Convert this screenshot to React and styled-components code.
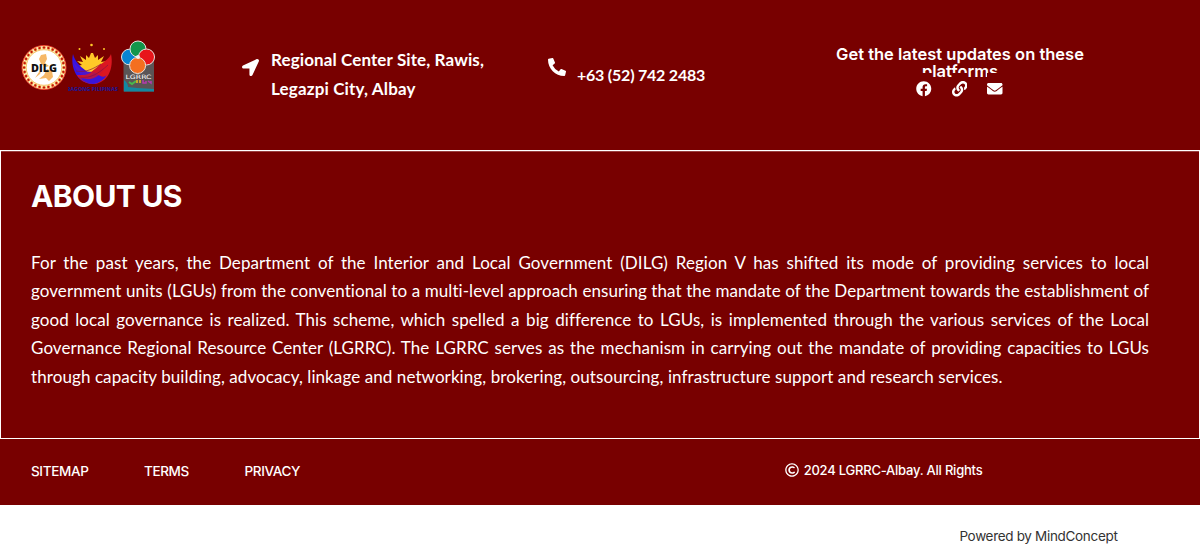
import React from "react";
import styled, { createGlobalStyle } from "styled-components";
import { FaLocationArrow, FaPhoneAlt, FaFacebook, FaLink, FaEnvelope, FaRegCopyright } from "react-icons/fa";

const Global = createGlobalStyle`
  * { box-sizing: border-box; }
  body { margin: 0; background: #fff; font-family: "Lato", "Liberation Sans", sans-serif; }
`;
const Footer = styled.footer`
  background: #780000;
  color: #fff;
  height: 505px;
`;
const Top = styled.div`
  height: 150px;
  display: grid;
  grid-template-columns: 242px 306px 288px 248px;
  align-items: start;
`;
const Logos = styled.div`
  display: flex;
  padding: 40px 0 0 20px;
`;
const Contact = styled.div`
  display: flex;
  gap: ${(p) => p.$gap}px;
  padding-top: ${(p) => p.$top}px;
  svg { margin-top: ${(p) => p.$iconTop}px; flex: none; }
`;
const ContactText = styled.div`
  padding-top: ${(p) => p.$offset || 0}px;
  font-weight: 700;
  font-size: ${(p) => p.$size || 17}px;
  line-height: 28.5px;
  white-space: nowrap;
`;
const Line = styled.span`
  display: block;
  white-space: nowrap;
  letter-spacing: ${(p) => p.$ls || 0}px;
`;
const Social = styled.div`
  padding-top: 46px;
  text-align: center;
`;
const SocialTitle = styled.h2`
  margin: 0;
  height: 30px;
  font: 600 16.5px/17px "Inter", sans-serif;
`;
const SocialIcons = styled.div`
  position: relative;
  display: flex;
  justify-content: center;
  gap: 20px;
  margin-top: -3px;
  padding-right: 1px;
`;
const SocialLink = styled.span`
  display: flex;
  padding-top: 8px;
  background: #780000;
`;
const About = styled.section`
  height: 289px;
  border: 1px solid #fff;
  box-shadow: inset 0 1px 0 rgba(255, 255, 255, 0.25);
  padding: 25px 50px 0 30px;
`;
const Title = styled.h1`
  margin: 0;
  font: 700 30px/41px "Inter", sans-serif;
  letter-spacing: -0.65px;
`;
const Body = styled.div`
  margin-top: 31.5px;
  font-size: 17px;
  line-height: 28.5px;
  font-variant-ligatures: none;
`;
const Justified = styled(Line)`
  width: 1118px;
  text-align: justify;
  text-align-last: ${(p) => (p.$last ? "left" : "justify")};
`;
const Bottom = styled.div`
  height: 66px;
  display: flex;
  justify-content: space-between;
  font: 500 13.5px/20px "Inter", sans-serif;
  padding: 22px 217.5px 0 31px;
`;
const Links = styled.nav`
  display: flex;
  gap: 55.5px;
`;
const Copyright = styled.div`
  display: flex;
  align-items: center;
  gap: 5px;
  height: 18px;
  font-size: 13px;
`;
const Credit = styled.div`
  display: flex;
  justify-content: flex-end;
  padding: 21px 82.5px 0 0;
  color: #333;
  font: 400 13.5px/20px "Inter", sans-serif;
`;

const beads = Array.from({ length: 28 }, (_, i) => i * (360 / 28));
const DilgLogo = () => (
  <svg width="48" height="54" viewBox="20 40 48 54">
    <circle cx="44" cy="67.5" r="22" fill="#fff4d0" stroke="#ef4030" strokeWidth="1" />
    {beads.map((a) => (
      <circle key={a} cx="44" cy="47.6" r="1.5" fill="#c40d12" stroke="#f5ce3e" strokeWidth=".5" transform={`rotate(${a} 44 67.5)`} />
    ))}
    <circle cx="44" cy="67.5" r="17.8" fill="#fff" stroke="#f3b548" strokeWidth=".8" />
    <path d="M41 55l5-1 1 5-2 4 4 3-3 1-5-3-2-5zM47 69l5 2 1 6-4 4-3-3-7 1 5-4zM39 72l3-3-2 5-5 4z" fill="#f6b766" />
    <text x="44" y="71.6" textAnchor="middle" textLength="26" lengthAdjust="spacingAndGlyphs" fontFamily="Open Sans, sans-serif" fontSize="10.5" fontWeight="800" fill="#111">DILG</text>
  </svg>
);
const BagongLogo = () => (
  <svg width="52" height="54" viewBox="68 40 52 54">
    <g fill="#ffc928">
      <circle cx="79.500" cy="49" r="1" /><circle cx="91.500" cy="45" r="1.3" /><circle cx="104" cy="49" r="1" />
      <path d="M76 66l6-1-5-4 6 1-3-6 6 4 0-5 3 3 2-5h2l2 5 3-3 0 5 6-4-3 6 6-1-5 4 6 1-9 6H84z" />
    </g>
    <path d="M73 54c-3 13 4 30 20 30 5 0 8-3 10-6-7 1-12-3-18-8-5-4-10-8-12-16z" fill="#3413e4" />
    <path d="M111 54c3 14-3 29-17 30-8 0-14-4-17-9 13 2 17-6 24-11 4-3 8-5 10-10z" fill="#dc1720" />
    <path d="M73 61c5 8 12 11 20 11l-5 4c-7 0-13-5-15-15z" fill="#4b16cf" />
    <path d="M94 72c7 5 10 6 13 3-3 5-8 8-13 9-5 0-10-2-14-6 6 1 10-2 14-6z" fill="#3a15d9" />
    <path d="M77 75c13 2 17-6 24-11 3 1 3 4 2 7-6 7-15 12-26 4z" fill="#cd1530" opacity=".8" />
    <path d="M76 71c11 2 18-3 25-7M79 77c12 2 20-4 29-12" fill="none" stroke="#8b1040" strokeWidth=".7" />
    <text x="92.500" y="91" textAnchor="middle" textLength="51" lengthAdjust="spacingAndGlyphs" fontFamily="Open Sans, sans-serif" fontSize="4.800" fontWeight="800" fill="#26158c">BAGONG PILIPINAS</text>
  </svg>
);
const LgrrcLogo = () => (
  <svg width="38" height="54" viewBox="120 40 38 54">
    <path d="M123.500 60h30.500v31.500h-30.500z" fill="#5b5556" />
    <g stroke="#e9e3df" strokeWidth="1">
      <circle cx="129.300" cy="57" r="7.800" fill="#0784d2" />
      <circle cx="138" cy="49" r="8" fill="#13964b" />
      <circle cx="146.500" cy="57" r="8" fill="#e8151b" />
      <circle cx="137.600" cy="65.500" r="8" fill="#f46f20" />
    </g>
    <circle cx="138" cy="57" r="2" fill="#eee" />
    <text x="138.500" y="78.500" textAnchor="middle" textLength="26" lengthAdjust="spacingAndGlyphs" fontFamily="DejaVu Sans, sans-serif" fontSize="6" fill="#fff">LGRRC</text>
    <path d="M124 80q4 3 4 7l9 1 17 1v2.500h-30z" fill="#1389a1" />
    <path d="M129 82l3 2 4-3" stroke="#48b94c" strokeWidth="2" fill="none" />
    <path d="M137 83v-3M140 80v3" stroke="#e2b921" strokeWidth="1.600" />
    <path d="M143 80v3h3v-2M148 81l3 2v-2" stroke="#b43bad" strokeWidth="1.500" fill="none" />
  </svg>
);

const PARAGRAPH = [
  "For the past years, the Department of the Interior and Local Government (DILG) Region V has shifted its mode of providing services to local",
  "government units (LGUs) from the conventional to a multi-level approach ensuring that the mandate of the Department towards the establishment of",
  "good local governance is realized. This scheme, which spelled a big difference to LGUs, is implemented through the various services of the Local",
  "Governance Regional Resource Center (LGRRC). The LGRRC serves as the mechanism in carrying out the mandate of providing capacities to LGUs",
  "through capacity building, advocacy, linkage and networking, brokering, outsourcing, infrastructure support and research services.",
];

export default function App() {
  return (
    <>
      <Global />
      <Footer>
        <Top>
          <Logos><DilgLogo /><BagongLogo /><LgrrcLogo /></Logos>
          <Contact $gap={12} $top={46} $iconTop={13}>
            <FaLocationArrow size={17} />
            <ContactText><Line $ls={0.11}>Regional Center Site, Rawis,</Line><Line $ls={0.15}>Legazpi City, Albay</Line></ContactText>
          </Contact>
          <Contact $gap={11} $top={58} $iconTop={0}>
            <FaPhoneAlt size={18} />
            <ContactText $offset={3} $size={16}><Line $ls={-0.22}>+63 (52) 742 2483</Line></ContactText>
          </Contact>
          <Social>
            <SocialTitle><Line>Get the latest updates on these</Line><Line>platforms</Line></SocialTitle>
            <SocialIcons>
              <SocialLink><FaFacebook size={15.5} /></SocialLink>
              <SocialLink><FaLink size={15.5} /></SocialLink>
              <SocialLink><FaEnvelope size={15.5} /></SocialLink>
            </SocialIcons>
          </Social>
        </Top>
        <About>
          <Title>ABOUT US</Title>
          <Body>
            {PARAGRAPH.map((t, i) => <Justified key={i} $ls={i === 4 ? 0.085 : 0.07} $last={i === 4}>{t}</Justified>)}
          </Body>
        </About>
        <Bottom>
          <Links><Line $ls={-0.35}>SITEMAP</Line><Line $ls={-0.35}>TERMS</Line><Line $ls={-0.35}>PRIVACY</Line></Links>
          <Copyright><FaRegCopyright size={14} /><Line $ls={-0.22}>2024 LGRRC-Albay. All Rights</Line></Copyright>
        </Bottom>
      </Footer>
      <Credit><Line $ls={-0.32}>Powered by MindConcept</Line></Credit>
    </>
  );
}
